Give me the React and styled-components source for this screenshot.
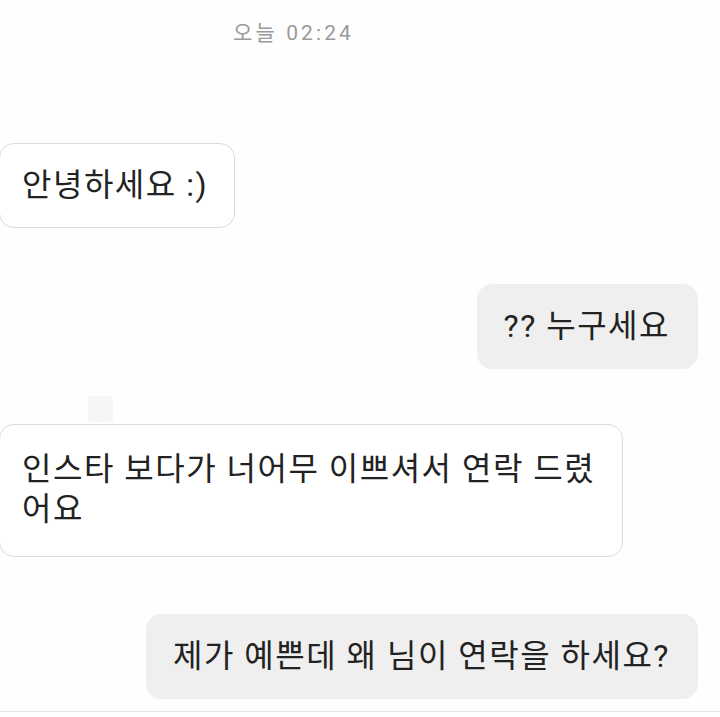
import React from "react";
import styled, { createGlobalStyle } from "styled-components";

const Global = createGlobalStyle`
  html, body { margin: 0; padding: 0; background: #fefefe; }
  body { font-family: Roboto, "Noto Sans CJK KR", sans-serif; }
`;

const Screen = styled.div`
  width: 720px;
  height: 717px;
  overflow: hidden;
  display: flex;
  flex-direction: column;
  background: #fefefe;
`;

const Thread = styled.div`
  display: flex;
  flex-direction: column;
  padding-top: 19px;
  height: 712px;
  border-bottom: 1px solid #e4e4e4;
  box-sizing: border-box;
`;

const Stamp = styled.div`
  padding-left: 233px;
  font-size: 21px;
  letter-spacing: 3.1px;
  line-height: 28px;
  color: #9a9a9a;
  margin-bottom: 96px;
`;

const Row = styled.div`
  display: flex;
  justify-content: ${(p) => (p.$mine ? "flex-end" : "flex-start")};
  padding-right: ${(p) => (p.$mine ? "22px" : "0")};
  margin-top: ${(p) => p.$gap || 0}px;
`;

const Ghost = styled.div`
  width: 25px;
  height: 26px;
  margin: 27px 0 0 88px;
  border-radius: 3px;
  background: #f6f6f6;
`;

const Bubble = styled.div`
  box-sizing: border-box;
  width: ${(p) => (p.$width ? `${p.$width}px` : "auto")};
  padding: ${(p) => (p.$multi ? "24px" : "21px")}
    ${(p) => (p.$mine ? "27px" : "26px")}
    ${(p) => (p.$multi ? "27px" : "22px")}
    ${(p) => (p.$mine ? "26px" : "22px")};
  border-radius: 15px;
  font-size: 32px;
  letter-spacing: 1.5px;
  line-height: 40px;
  color: #222;
  background: ${(p) => (p.$mine ? "#efefef" : "#ffffff")};
  border: 1px solid ${(p) => (p.$mine ? "#efefef" : "#dadada")};
  margin-left: ${(p) => (p.$mine ? "0" : "-1px")};
`;

export default function App() {
  return (
    <>
      <Global />
      <Screen>
        <Thread>
          <Stamp>오늘 02:24</Stamp>
          <Row>
            <Bubble>안녕하세요 :)</Bubble>
          </Row>
          <Row $mine $gap={56}>
            <Bubble $mine>?? 누구세요</Bubble>
          </Row>
          <Ghost />
          <Row $gap={2}>
            <Bubble $multi $width={624}>
              인스타 보다가 너어무 이쁘셔서 연락 드렸어요
            </Bubble>
          </Row>
          <Row $mine $gap={57}>
            <Bubble $mine>제가 예쁜데 왜 님이 연락을 하세요?</Bubble>
          </Row>
        </Thread>
      </Screen>
    </>
  );
}
